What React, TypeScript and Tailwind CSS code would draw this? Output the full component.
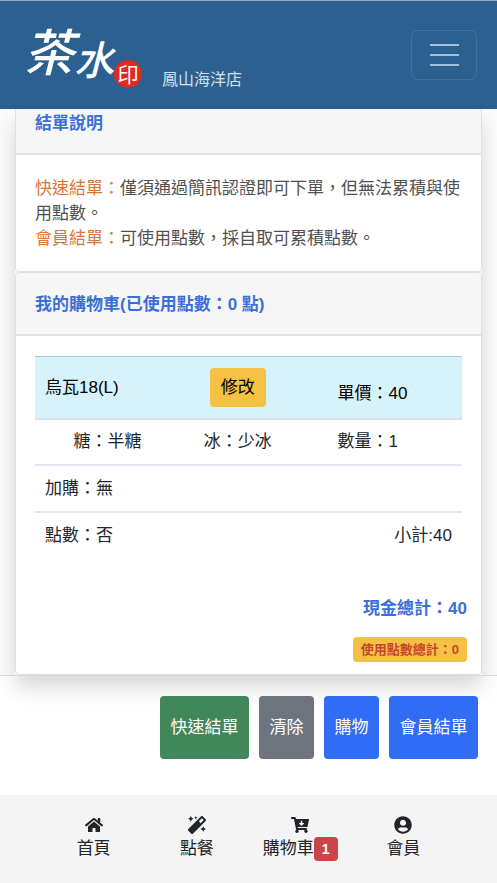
import { FaCartArrowDown, FaHome, FaMagic, FaUserCircle } from "react-icons/fa";

const navItems = [
  { label: "首頁", icon: FaHome },
  { label: "點餐", icon: FaMagic },
  { label: "購物車", icon: FaCartArrowDown, count: 1 },
  { label: "會員", icon: FaUserCircle },
];

function Header() {
  return (
    <header className="flex h-[109px] items-center justify-between border-t border-[#8fb0cd] bg-[#2c6090] px-5">
      <a href="#" className="flex items-end text-white">
        <span className="ml-1 flex h-[74px] items-end pb-2 font-medium italic">
          <span className="text-[50px] leading-[60px]">茶</span>
          <span className="text-[40px] leading-[46px]">水</span>
        </span>
        <span className="mb-1 flex size-7 items-center justify-center rounded-full bg-[#dd2a22] text-[21px] leading-none">
          印
        </span>
        <span className="ml-5 text-[16px] leading-6 text-[#d3e0ec]">鳳山海洋店</span>
      </a>
      <button
        type="button"
        aria-label="選單"
        className="flex h-[50px] w-[66px] flex-col items-center justify-center gap-2 rounded-md border border-[#3f729f]"
      >
        <span className="h-[2px] w-[29px] bg-[#a0c0df]" />
        <span className="h-[2px] w-[29px] bg-[#a0c0df]" />
        <span className="h-[2px] w-[29px] bg-[#a0c0df]" />
      </button>
    </header>
  );
}

function CartTable() {
  return (
    <table className="w-full table-fixed border-collapse text-[#212529]">
      <colgroup>
        <col className="w-[34%]" />
        <col className="w-[27%]" />
        <col className="w-[39%]" />
      </colgroup>
      <tbody>
        <tr className="h-[62px] border-t border-b-2 border-t-[#a9cdd8] border-b-[#dcdfe9] bg-[#d6f2fa] text-black">
          <td className="px-[10px]">烏瓦18(L)</td>
          <td className="text-center">
            <button type="button" className="h-[39px] rounded bg-[#f4c145] px-[11px]">
              修改
            </button>
          </td>
          <td className="pt-3 pl-[42px]">單價：40</td>
        </tr>
        <tr className="h-[46px] border-b-2 border-[#e4e5ee]">
          <td className="text-center">糖：半糖</td>
          <td className="text-center">冰：少冰</td>
          <td className="pl-[42px]">數量：1</td>
        </tr>
        <tr className="h-[47px] border-b-2 border-[#e4e5ee]">
          <td colSpan={3} className="px-[10px]">
            加購：無
          </td>
        </tr>
        <tr className="h-[46px]">
          <td colSpan={2} className="px-[10px]">
            點數：否
          </td>
          <td className="px-[10px] text-right">小計:40</td>
        </tr>
      </tbody>
    </table>
  );
}

export default function App() {
  return (
    <div className="flex min-h-screen flex-col bg-white font-['Liberation_Sans','Noto_Sans_CJK_TC',sans-serif] text-[17px] leading-[25px]">
      <Header />

      <main className="bg-[#fcfcfc] px-[15px]">
        <div className="shadow-[0_12px_20px_rgba(0,0,0,0.16)]">
          {/* Checkout notes */}
          <section className="rounded-b border border-t-0 border-[#dfdfdf] bg-white">
            <h2 className="border-b-2 border-[#e2e2e2] bg-[#f6f6f6] px-[19px] pt-[2px] pb-[17px] font-bold text-[#3b6fd8]">
              結單說明
            </h2>
            <div className="px-[19px] pt-[21px] pb-5 text-[#505050]">
              <p>
                <span className="text-[#d9753b]">快速結單：</span>
                僅須通過簡訊認證即可下單，但無法累積與使用點數。
              </p>
              <p>
                <span className="text-[#d9753b]">會員結單：</span>
                可使用點數，採自取可累積點數。
              </p>
            </div>
          </section>

          {/* Cart */}
          <section className="rounded border border-[#dfdfdf] bg-white">
            <h2 className="rounded-t border-b-2 border-[#e2e2e2] bg-[#f6f6f6] px-[19px] pt-[19px] pb-[17px] font-bold text-[#3b6fd8]">
              我的購物車(已使用點數：0 點)
            </h2>
            <div className="px-[19px] pt-5">
              <CartTable />
            </div>
            <div className="flex flex-col items-end px-[14px] pt-[38px] pb-3">
              <p className="font-bold text-[#3b6fd8]">現金總計：40</p>
              <span className="mt-4 rounded bg-[#f4c145] px-2 text-[13px] leading-[25px] font-bold text-[#c9452c]">
                使用點數總計：0
              </span>
            </div>
          </section>
        </div>
      </main>

      <div className="flex grow items-start justify-end gap-[10px] border-t border-[#d5d7dc] px-[19px] pt-5 text-white">
        <button type="button" className="h-[63px] w-[89px] rounded bg-[#428759]">
          快速結單
        </button>
        <button type="button" className="h-[63px] w-[55px] rounded bg-[#6d747d]">
          清除
        </button>
        <button type="button" className="h-[63px] w-[55px] rounded bg-[#316cf4]">
          購物
        </button>
        <button type="button" className="h-[63px] w-[89px] rounded bg-[#316cf4]">
          會員結單
        </button>
      </div>

      <nav className="grid h-[88px] grid-cols-4 bg-[#f4f4f4] px-[42px] pt-[21px] text-[#212529]">
        {navItems.map(({ label, icon: Icon, count }) => (
          <a key={label} href="#" className="flex flex-col items-center gap-[2px]">
            <Icon className="size-[18px]" />
            <span className="flex items-center">
              {label}
              {count && (
                <span className="rounded bg-[#cb444a] px-2 text-[14px] leading-6 font-bold text-white">
                  {count}
                </span>
              )}
            </span>
          </a>
        ))}
      </nav>
    </div>
  );
}
